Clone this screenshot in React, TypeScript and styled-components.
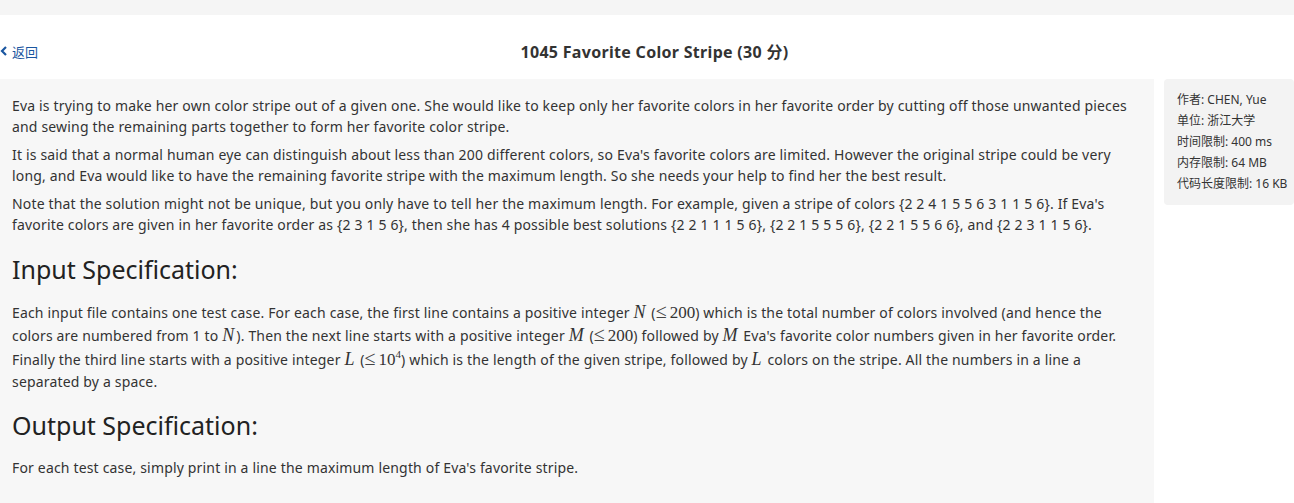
import React from "react";
import styled, { createGlobalStyle } from "styled-components";

const Global = createGlobalStyle`
  html, body { margin: 0; padding: 0; background: #ffffff; }
  body {
    font-family: "Noto Sans", "Noto Sans CJK SC", sans-serif;
    color: #333333;
  }
`;

const Page = styled.div`
  width: 1294px;
  min-height: 503px;
  padding-top: 15px;
  background: linear-gradient(#f5f5f5 0 15px, #ffffff 15px);
  box-sizing: border-box;
`;

const Header = styled.header`
  height: 64px;
  display: grid;
  grid-template-columns: 1fr auto 1fr;
  align-items: center;
  background: #ffffff;
`;

const BackLink = styled.a`
  display: flex;
  align-items: center;
  gap: 4px;
  font-size: 13px;
  color: #1a56a0;
  text-decoration: none;
  font-family: "Noto Sans CJK SC", sans-serif;
  padding-top: 8px;
`;

const Title = styled.h1`
  margin: 0;
  padding: 7px 0 0 15px;
  font-size: 16px;
  font-weight: 700;
  letter-spacing: 0.3px;
  color: #333333;
  font-family: "Noto Sans", "Noto Sans CJK SC", sans-serif;
`;

const Body = styled.div`
  display: flex;
  gap: 10px;
  align-items: flex-start;
`;

const Main = styled.main`
  width: 1154px;
  flex: none;
  background: #f7f7f7;
  padding: 16px 12px 20px 12px;
  box-sizing: border-box;
  min-height: 424px;
`;

const Para = styled.p<{ $tall?: boolean }>`
  margin: 0 0 ${(p) => (p.$tall ? "-3px" : "7px")};
  font-size: 14px;
  letter-spacing: 0.17px;
  line-height: ${(p) => (p.$tall ? "22.4px" : "21px")};
`;

const Heading = styled.h2`
  margin: 17px 0 15px;
  font-size: 25px;
  font-weight: 400;
  line-height: 34px;
  color: #222222;
`;

const Var = styled.span`
  font-family: "Liberation Serif", "DejaVu Serif", serif;
  font-style: italic;
  font-size: 18px;
  line-height: 1;
  letter-spacing: 0;
  padding-right: 2px;
`;

const Num = styled.span`
  font-family: "Liberation Serif", "DejaVu Serif", serif;
  font-size: 17px;
  line-height: 1;
  letter-spacing: 0;
`;

const Rel = styled.span`
  font-size: 20px;
  color: #444444;
  margin-right: 3px;
`;

const Sup = styled.sup`
  font-size: 11px;
  line-height: 0;
`;

const Side = styled.aside`
  width: 130px;
  flex: none;
  background: #f3f3f3;
  border-radius: 4px;
  padding: 10px 0 11px 13px;
  box-sizing: border-box;
  font-size: 12px;
  line-height: 21px;
  font-family: "Noto Sans", "Noto Sans CJK SC", sans-serif;
  color: #333333;
`;

const SideRow = styled.div`
  white-space: nowrap;
`;

const info = [
  "作者: CHEN, Yue",
  "单位: 浙江大学",
  "时间限制: 400 ms",
  "内存限制: 64 MB",
  "代码长度限制: 16 KB",
];

export default function App() {
  return (
    <>
      <Global />
      <Page>
        <Header>
          <BackLink href="#">
            <svg width="8" height="10" viewBox="0 0 8 10">
              <path d="M6 1 L2 5 L6 9" stroke="#1a56a0" strokeWidth="2.2" fill="none" />
            </svg>
            返回
          </BackLink>
          <Title>1045 Favorite Color Stripe (30 分)</Title>
          <div />
        </Header>
        <Body>
          <Main>
            <Para>
              Eva is trying to make her own color stripe out of a given one. She would like to keep only her favorite colors in her favorite order by cutting off those unwanted pieces and sewing the remaining parts together to form her favorite color stripe.
            </Para>
            <Para>
              It is said that a normal human eye can distinguish about less than 200 different colors, so Eva's favorite colors are limited. However the original stripe could be very long, and Eva would like to have the remaining favorite stripe with the maximum length. So she needs your help to find her the best result.
            </Para>
            <Para>
              Note that the solution might not be unique, but you only have to tell her the maximum length. For example, given a stripe of colors {"{2 2 4 1 5 5 6 3 1 1 5 6}"}. If Eva's favorite colors are given in her favorite order as {"{2 3 1 5 6}"}, then she has 4 possible best solutions {"{2 2 1 1 1 5 6}"}, {"{2 2 1 5 5 5 6}"}, {"{2 2 1 5 5 6 6}"}, and {"{2 2 3 1 1 5 6}"}.
            </Para>
            <Heading>Input Specification:</Heading>
            <Para $tall>
              Each input file contains one test case. For each case, the first line contains a positive integer <Var>N</Var> (<Num><Rel>≤</Rel>200</Num>) which is the total number of colors involved (and hence the colors are numbered from 1 to <Var>N</Var>). Then the next line starts with a positive integer <Var>M</Var> (<Num><Rel>≤</Rel>200</Num>) followed by <Var>M</Var> Eva's favorite color numbers given in her favorite order. Finally the third line starts with a positive integer <Var>L</Var> (<Num><Rel>≤</Rel>10<Sup>4</Sup></Num>) which is the length of the given stripe, followed by <Var>L</Var> colors on the stripe. All the numbers in a line a separated by a space.
            </Para>
            <Heading>Output Specification:</Heading>
            <Para>For each test case, simply print in a line the maximum length of Eva's favorite stripe.</Para>
          </Main>
          <Side>
            {info.map((t) => (
              <SideRow key={t}>{t}</SideRow>
            ))}
          </Side>
        </Body>
      </Page>
    </>
  );
}
